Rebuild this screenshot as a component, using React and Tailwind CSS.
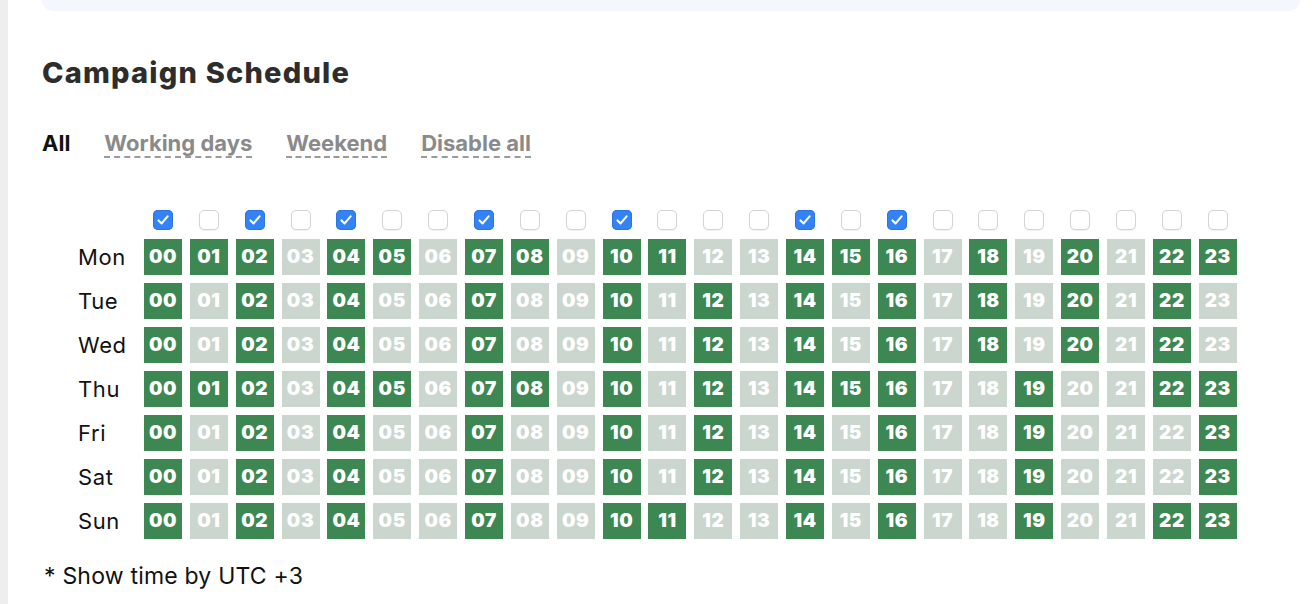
import { useState } from "react"

const HOURS = Array.from({ length: 24 }, (_, i) => String(i).padStart(2, "0"))

const ROWS = [
  { day: "Mon", on: "111011011011001110101011" },
  { day: "Tue", on: "101010010010101010101010" },
  { day: "Wed", on: "101010010010101010101010" },
  { day: "Thu", on: "111011011010101110010011" },
  { day: "Fri", on: "101010010010101010010001" },
  { day: "Sat", on: "101010010010101010010001" },
  { day: "Sun", on: "101010010011001010010011" },
]

const CHECKED = "101010010010001010000000"

const Checkbox = ({ checked }) => (
  <span
    className={`flex h-[20px] w-[20px] items-center justify-center rounded-[5px] ${
      checked
        ? "bg-[#3382f6] shadow-[inset_0_0_0_1px_#2c74e0]"
        : "border border-[#d4d4d4] bg-white shadow-[0_1px_1px_rgba(0,0,0,0.06)]"
    }`}
  >
    {checked && (
      <svg width="14" height="14" viewBox="0 0 14 14" fill="none">
        <path d="M2.5 7.4 5.6 10.4 11.6 3.4" stroke="white" strokeWidth="2.1" strokeLinecap="round" strokeLinejoin="round" />
      </svg>
    )}
  </span>
)

export default function App() {
  const [filter, setFilter] = useState("all")
  const tabs = [
    { id: "all", label: "All" },
    { id: "work", label: "Working days" },
    { id: "weekend", label: "Weekend" },
    { id: "disable", label: "Disable all" },
  ]

  return (
    <div className="flex h-[604px] w-[1312px] overflow-hidden bg-white font-['Inter',sans-serif]">
      <div className="w-[8px] shrink-0 bg-[#eeeeee]" />
      <div className="flex-1 pl-[34px] pr-[12px]">
        <div className="h-[11px] rounded-b-[12px] bg-[#f4f7fd]" />

        <h2 className="mt-[45px] text-[29px] leading-[34px] font-extrabold tracking-[1.2px] text-[#2d2d2d]">
          Campaign Schedule
        </h2>

        <div className="mt-[41px] flex items-start gap-[34px]">
          {tabs.map((t) => (
            <button
              key={t.id}
              onClick={() => setFilter(t.id)}
              className={`text-[22px] leading-[24px] font-bold ${
                t.id === "all"
                  ? "text-[#111111]"
                  : "border-b-2 border-dashed border-[#9a9a9a] pb-[1px] text-[#8a8a8a]"
              }`}
            >
              {t.label}
            </button>
          ))}
        </div>

        <div className="mt-[52px] ml-[36px]">
          <div className="flex">
            <div className="w-[66px] shrink-0" />
            <div className="flex gap-[7.87px]">
              {HOURS.map((h, i) => (
                <div key={h} className="flex w-[38px] justify-center">
                  <Checkbox checked={CHECKED[i] === "1"} />
                </div>
              ))}
            </div>
          </div>

          <div className="mt-[9px] flex flex-col gap-[8px]">
            {ROWS.map((r) => (
              <div key={r.day} className="flex items-center">
                <div className="w-[66px] shrink-0 text-[22px] leading-[36px] tracking-[0.6px] text-[#111111]">{r.day}</div>
                <div className="flex gap-[7.87px]">
                  {HOURS.map((h, i) => (
                    <div
                      key={h}
                      className={`flex h-[36px] w-[38px] items-center justify-center text-[19px] font-black tracking-[0.6px] text-white ${
                        r.on[i] === "1" ? "bg-[#3d8852]" : "bg-[#cbd6ce]"
                      }`}
                    >
                      {h}
                    </div>
                  ))}
                </div>
              </div>
            ))}
          </div>
        </div>

        <p className="mt-[24px] pl-[2px] text-[23px] leading-[26px] tracking-[0.2px] text-[#111111]">* Show time by UTC +3</p>
      </div>
    </div>
  )
}
